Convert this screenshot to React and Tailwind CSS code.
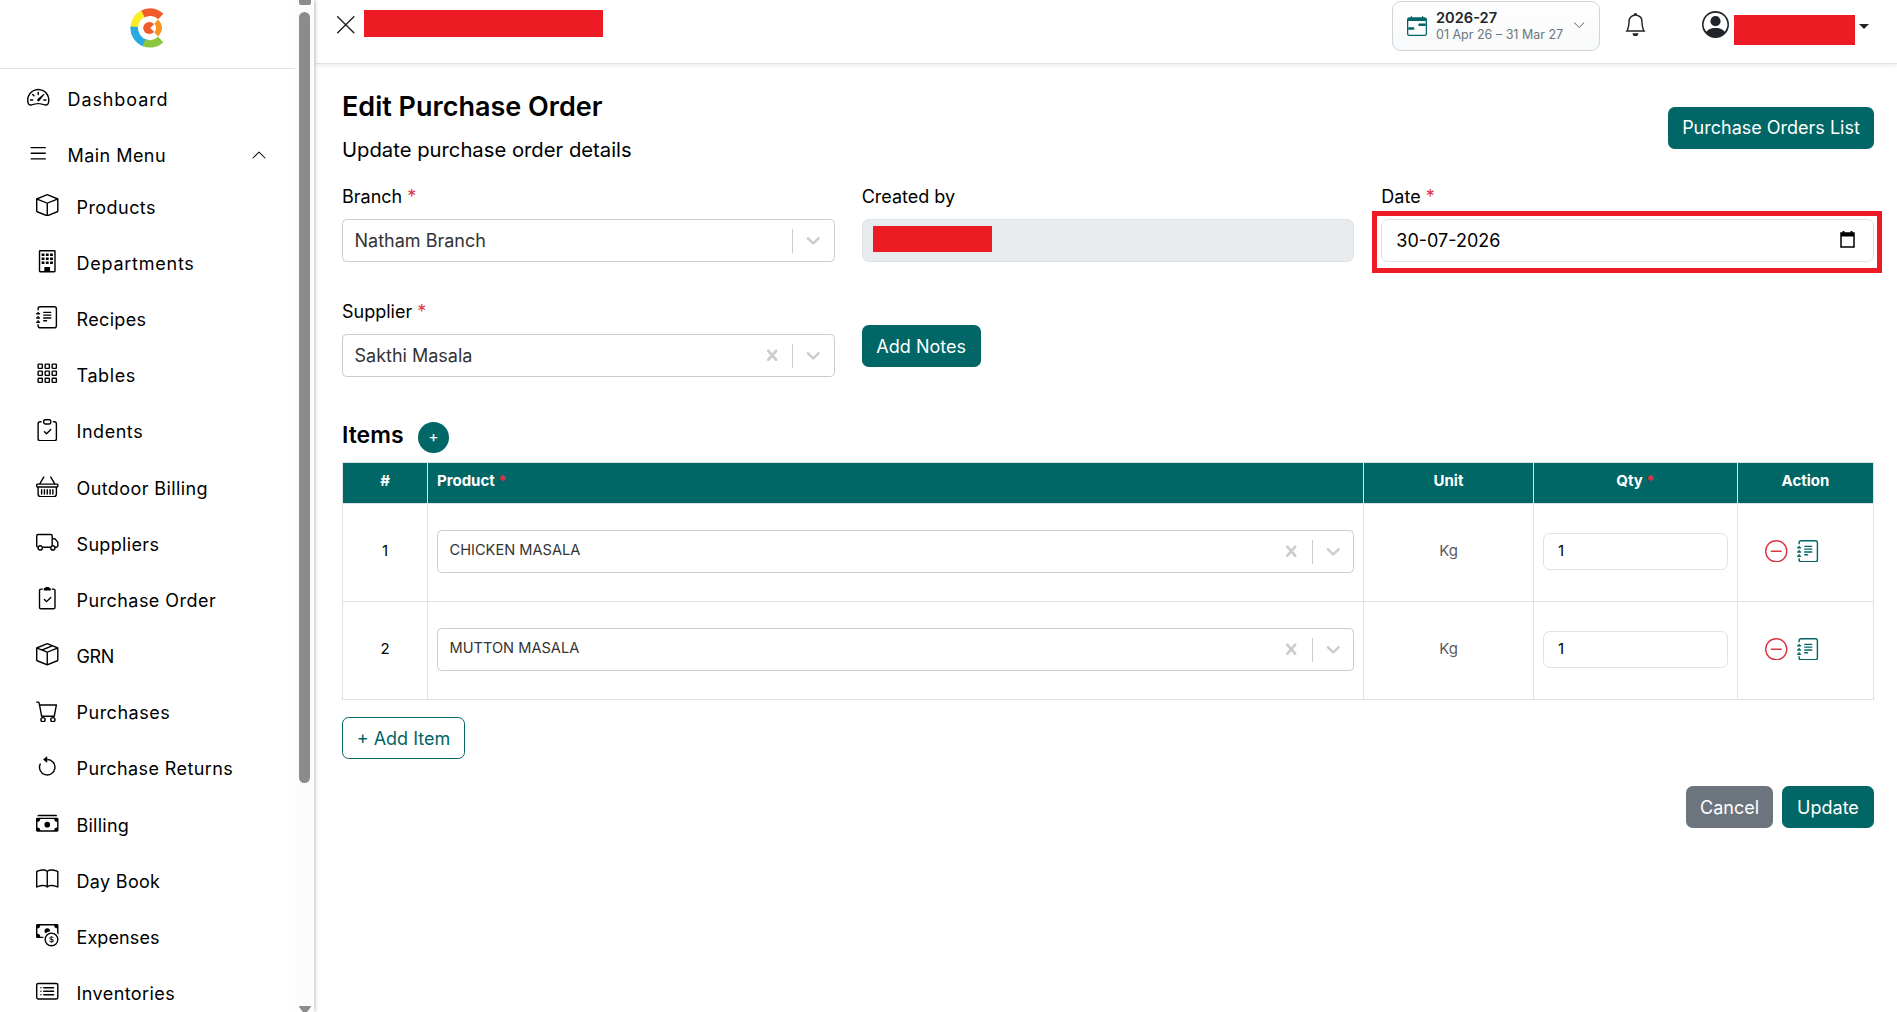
import React from 'react';
import {
  BsSpeedometer2,
  BsList,
  BsBoxSeam,
  BsBox,
  BsJournalText,
  BsGrid3X3Gap,
  BsClipboardCheck,
  BsBasket,
  BsTruck,
  BsCart,
  BsArrowCounterclockwise,
  BsCashStack,
  BsBook,
  BsCashCoin,
  BsCardList,
  BsChevronUp,
  BsChevronDown,
  BsXLg,
  BsCalendarRange,
  BsBell,
  BsPersonCircle,
  BsDashCircle,
} from 'react-icons/bs';

// Tall building with a grid of windows
const BuildingIcon = ({ className }) => (
  <svg viewBox="0 0 16 16" fill="currentColor" className={className}>
    <path fillRule="evenodd" d="M3 0a1 1 0 0 0-1 1v14a1 1 0 0 0 1 1h10a1 1 0 0 0 1-1V1a1 1 0 0 0-1-1zm0 1h10v14h-3v-2.5a.5.5 0 0 0-.5-.5h-3a.5.5 0 0 0-.5.5V15H3z" />
    <path d="M4 2.5h2v1.8H4zM7 2.5h2v1.8H7zM10 2.5h2v1.8h-2zM4 5.3h2v1.8H4zM7 5.3h2v1.8H7zM10 5.3h2v1.8h-2zM4 8.1h2v1.8H4zM7 8.1h2v1.8H7zM10 8.1h2v1.8h-2zM6.2 12h3.6v3.5H6.2z" />
  </svg>
);

// Narrow clipboard with a solid clip
const OrderIcon = ({ className }) => (
  <svg viewBox="0 0 16 16" fill="none" stroke="currentColor" className={className}>
    <path d="M4.5 1.5h-1a1 1 0 0 0-1 1v12a1 1 0 0 0 1 1h9a1 1 0 0 0 1-1v-12a1 1 0 0 0-1-1h-1" strokeLinecap="round" />
    <path d="M6 8.9l1.5 1.5 3-3" strokeLinecap="round" strokeLinejoin="round" />
    <path d="M5.5 2.5V1.2A1 1 0 0 1 6.5.5 1.6 1.6 0 0 1 8 0a1.6 1.6 0 0 1 1.5.5 1 1 0 0 1 1 .7v1.3z" fill="currentColor" stroke="none" />
  </svg>
);

const subMenu = [
  { label: 'Products', icon: BsBox, tracking: 'tracking-[0.44px]' },
  { label: 'Departments', icon: BuildingIcon, tracking: 'tracking-[0.75px]' },
  { label: 'Recipes', icon: BsJournalText, tracking: 'tracking-[0.35px]' },
  { label: 'Tables', icon: BsGrid3X3Gap, tracking: 'tracking-[0.6px]' },
  { label: 'Indents', icon: BsClipboardCheck, tracking: 'tracking-[0.55px]' },
  { label: 'Outdoor Billing', icon: BsBasket, tracking: 'tracking-[0.4px]' },
  { label: 'Suppliers', icon: BsTruck, tracking: 'tracking-[0.34px]' },
  { label: 'Purchase Order', icon: OrderIcon, tracking: 'tracking-[0.46px]' },
  { label: 'GRN', icon: BsBoxSeam, tracking: 'tracking-[-0.4px]' },
  { label: 'Purchases', icon: BsCart, tracking: 'tracking-[0.5px]' },
  { label: 'Purchase Returns', icon: BsArrowCounterclockwise, tracking: 'tracking-[0.4px]' },
  { label: 'Billing', icon: BsCashStack, tracking: 'tracking-[0.24px]' },
  { label: 'Day Book', icon: BsBook, tracking: 'tracking-[0.32px]' },
  { label: 'Expenses', icon: BsCashCoin, tracking: 'tracking-[0.1px]' },
  { label: 'Inventories', icon: BsCardList, tracking: 'tracking-[0.42px]' },
];

const items = [
  { id: 1, product: 'CHICKEN MASALA', unit: 'Kg', qty: 1 },
  { id: 2, product: 'MUTTON MASALA', unit: 'Kg', qty: 1 },
];

const Logo = () => (
  <svg width="34" height="40" viewBox="0 0 34 40" fill="none">
    <g strokeWidth="7.6">
      <path d="M12.2 6.2A15.8 15.8 0 0 1 30.8 8.4" stroke="#f15a29" />
      <path d="M4.2 19.5A15.8 15.8 0 0 1 13 5.8" stroke="#f9ed25" />
      <path d="M15 35A15.8 15.8 0 0 1 4.2 18.8" stroke="#27aae1" />
      <path d="M30.8 31.6A15.8 15.8 0 0 1 14 34.6" stroke="#8dc63f" />
    </g>
    <circle cx="19.3" cy="20" r="6.1" fill="#f15a29" />
    <path d="M26 14.6L20.2 20l5.8 5.4z" fill="#fff" />
    <path d="M28 11.5Q36 20 28 28.5L24.5 24.5Q27.5 20 24.5 15.5Z" fill="#f7941e" />
  </svg>
);

const Sidebar = () => (
  <aside className="relative z-10 flex h-full w-[314px] shrink-0 bg-white shadow-[1px_0_4px_rgba(0,0,0,0.25)]">
    <div className="w-[295px] overflow-hidden">
      <div className="flex h-[69px] justify-center border-b border-[#dee2e6] pt-2 pr-0.5">
        <Logo />
      </div>
      <nav className="text-[18px] text-black">
        <a className="mt-0.5 flex h-[56px] items-center pl-[27px]">
          <BsSpeedometer2 className="-mt-1 size-[22.5px]" />
          <span className="ml-[18px] tracking-[0.9px]">Dashboard</span>
        </a>
        <a className="flex h-[56px] items-center pr-[28px] pl-[27px]">
          <BsList className="-mt-1 size-[22.5px]" />
          <span className="ml-[18px] flex-1 tracking-[0.45px]">Main Menu</span>
          <BsChevronUp className="size-[16px]" />
        </a>
        <ul className="-mt-[4px]">
          {subMenu.map(({ label, icon: Icon, tracking }) => (
            <li key={label} className="flex h-[56.2px] items-center pl-[36px]">
              <Icon className="-mt-1 size-[22.5px]" />
              <span className={`ml-[18px] whitespace-nowrap ${tracking}`}>{label}</span>
            </li>
          ))}
        </ul>
      </nav>
    </div>
    {/* scrollbar */}
    <div className="flex w-[19px] flex-col items-center bg-[#fcfcfc]">
      <div className="h-[5px] w-3 rounded-b-[2px] bg-[#8b8b8b]" />
      <div className="mt-[7px] h-[771px] w-[11px] rounded-full bg-[#8b8b8b]" />
      <svg className="mt-auto" width="12" height="6" viewBox="0 0 12 6">
        <path d="M0 1Q0 0 1 0h10q1 0 1 1L8 6H4z" fill="#8b8b8b" />
      </svg>
    </div>
  </aside>
);

const TopBar = () => (
  <header className="flex h-16 items-start border-b border-[#dee2e6] pr-7 pl-[18px] shadow-[0_2px_4px_rgba(0,0,0,0.07)]">
    <BsXLg className="mt-[12.5px] size-[23.5px] text-[#212529]" />
    <div className="mt-2.5 ml-[6.5px] h-[27px] w-[239px] bg-[#ed1c24]" />
    <button className="mt-px ml-auto flex h-[50px] w-[208px] items-center rounded-[9px] border border-[#ced4da] bg-linear-to-b from-white to-[#f8f9fa] pl-[14px] text-left">
      <BsCalendarRange className="size-5 text-[#006666]" />
      <span className="ml-[9px] flex w-[136.5px] flex-col">
        <span className="text-[14.6px] leading-[17px] font-semibold text-[#212529]">2026-27</span>
        <span className="text-[12.5px] leading-[16px] whitespace-nowrap text-[#6c757d]">01 Apr 26 – 31 Mar 27</span>
      </span>
      <BsChevronDown className="-mt-0.5 size-[12.4px] text-[#6c757d]" />
    </button>
    <BsBell className="mt-[13px] ml-[24px] size-[23px] text-[#212529]" />
    <BsPersonCircle className="mt-[11px] ml-[55px] size-[27px] text-[#212529]" />
    <div className="mt-[15px] ml-[5px] h-[30px] w-[121px] bg-[#ed1c24]" />
    <span className="mt-6 ml-1 border-x-5 border-t-5 border-x-transparent border-t-[#212529]" />
  </header>
);

const Required = () => <span className="text-[#dc3545]">*</span>;

const Label = ({ children, required }) => (
  <label className="block h-6 text-[18px] leading-6">
    {children} {required && <Required />}
  </label>
);

const Select = ({ value, clearable, small }) => (
  <div className="flex h-[43px] w-full items-center rounded-[4.5px] border border-[#cccccc] bg-white pl-[11.5px] text-[#333333]">
    <span className={small ? '-mt-[2px] flex-1 text-[14.6px]' : 'flex-1 text-[18px]'}>{value}</span>
    {clearable && (
      <svg className="mr-[9px] size-[22.5px] text-[#cccccc]" viewBox="0 0 20 20" fill="currentColor">
        <path d="M14.348 14.849c-0.469 0.469-1.229 0.469-1.697 0l-2.651-3.030-2.651 3.029c-0.469 0.469-1.229 0.469-1.697 0-0.469-0.469-0.469-1.229 0-1.697l2.758-3.15-2.759-3.152c-0.469-0.469-0.469-1.228 0-1.697s1.228-0.469 1.697 0l2.652 3.031 2.651-3.031c0.469-0.469 1.228-0.469 1.697 0s0.469 1.229 0 1.697l-2.758 3.152 2.758 3.15c0.469 0.469 0.469 1.229 0 1.698z" />
      </svg>
    )}
    <span className="h-6 w-px bg-[#cccccc]" />
    <svg className="mx-[9px] size-[22.5px] text-[#cccccc]" viewBox="0 0 20 20" fill="currentColor">
      <path d="M4.516 7.548c0.436-0.446 1.043-0.481 1.576 0l3.908 3.747 3.908-3.747c0.533-0.481 1.141-0.446 1.574 0 0.436 0.445 0.408 1.197 0 1.615-0.406 0.418-4.695 4.502-4.695 4.502-0.217 0.223-0.502 0.335-0.787 0.335s-0.57-0.112-0.789-0.335c0 0-4.287-4.084-4.695-4.502s-0.436-1.17 0-1.615z" />
    </svg>
  </div>
);

const Button = ({ children, className }) => (
  <button className={`h-[42px] rounded-[6.75px] text-[18px] text-white ${className}`}>{children}</button>
);

const ItemsTable = () => (
  <table className="w-[1531px] table-fixed border-collapse text-[15px]">
    <colgroup>
      <col className="w-[85px]" />
      <col className="w-[936px]" />
      <col className="w-[170px]" />
      <col className="w-[204px]" />
      <col className="w-[136px]" />
    </colgroup>
    <thead className="bg-[#006666] text-white">
      <tr className="h-[41px] *:border *:border-[#dee2e6] *:pb-[3px] *:font-bold">
        <th>#</th>
        <th className="pl-[9px] text-left">Product <Required /></th>
        <th>Unit</th>
        <th>Qty <Required /></th>
        <th>Action</th>
      </tr>
    </thead>
    <tbody>
      {items.map((item) => (
        <tr key={item.id} className="h-[98px] *:border *:border-[#dee2e6]">
          <td className="pb-[3px] text-center">{item.id}</td>
          <td className="px-[9px] pb-[2px]">
            <Select value={item.product} clearable small />
          </td>
          <td className="pb-[3px] text-center text-[#595c5f]">{item.unit}</td>
          <td className="px-[9px] pb-[2px]">
            <div className="flex h-[37px] items-center rounded-[6.75px] border border-[#dee2e6] pb-px pl-[14px]">
              {item.qty}
            </div>
          </td>
          <td className="pb-[3px]">
            <div className="flex items-center gap-[9px] pl-[27px]">
              <BsDashCircle className="size-[22.5px] text-[#dc3545]" />
              <BsJournalText className="size-[22.5px] text-[#006666]" />
            </div>
          </td>
        </tr>
      ))}
    </tbody>
  </table>
);

const EditPurchaseOrder = () => (
  <main className="w-[1558px] pt-[27px] pl-[26px] text-black">
    <div className="flex items-center justify-between">
      <div>
        <h3 className="text-[27px] leading-8 font-semibold">Edit Purchase Order</h3>
        <p className="mt-[13px] text-[20.25px] leading-7">Update purchase order details</p>
      </div>
      <Button className="w-[206px] bg-[#006666]">Purchase Orders List</Button>
    </div>

    <div className="mt-[21px] grid grid-cols-3 gap-x-[27px] gap-y-[38px]">
      <div className="flex flex-col gap-2.5">
        <Label required>Branch</Label>
        <Select value="Natham Branch" />
      </div>
      <div className="flex flex-col gap-2.5">
        <Label>Created by</Label>
        <div className="h-[43px] rounded-[6.75px] border border-[#dee2e6] bg-[#e9ecef] pt-1.5 pl-2.5">
          <div className="h-[26px] w-[119px] bg-[#ed1c24]" />
        </div>
      </div>
      <div className="flex flex-col gap-2.5">
        <Label required>Date</Label>
        <div className="relative flex h-[43px] items-center justify-between rounded-[6.75px] border border-[#dee2e6] pr-[17.5px] pl-3.5 text-[18px]">
          30-07-2026
          <svg width="15" height="17" viewBox="0 0 15 17" className="-mt-0.5">
            <path d="M1 2h13v14H1z" fill="none" stroke="#000" strokeWidth="1.5" />
            <path d="M1 2h13v3.5H1zM2.6 0h1.8v2.5H2.6zM10.6 0h1.8v2.5h-1.8z" />
          </svg>
          <div className="absolute -top-[9px] -right-[9px] -bottom-[12px] -left-[10px] border-5 border-[#ed1c24]" />
        </div>
      </div>
      <div className="flex flex-col gap-2.5">
        <Label required>Supplier</Label>
        <Select value="Sakthi Masala" clearable />
      </div>
      <div className="pt-[25px]">
        <Button className="w-[119px] bg-[#006666]">Add Notes</Button>
      </div>
    </div>

    <div className="mt-[43px] flex h-[42px] items-start gap-[14.5px]">
      <h5 className="text-[23px] leading-[30px] font-semibold">Items</h5>
      <button className="mt-[1.5px] flex size-[31px] items-center justify-center rounded-full bg-[#006666] text-[15.75px] text-white">
        +
      </button>
    </div>
    <ItemsTable />

    <button className="mt-[17px] h-[42px] w-[123px] rounded-[6.75px] border border-[#006666] text-[18px] text-[#006666]">
      + Add Item
    </button>
    <div className="mt-[27px] flex justify-end gap-[9px]">
      <Button className="w-[87px] bg-[#6c757d]">Cancel</Button>
      <Button className="w-[92px] bg-[#006666]">Update</Button>
    </div>
  </main>
);

function App() {
  return (
    <div className="flex h-[1012px] w-[1897px] overflow-hidden bg-white font-['Inter',sans-serif]">
      <Sidebar />
      <div className="flex-1 pl-[2px]">
        <TopBar />
        <EditPurchaseOrder />
      </div>
    </div>
  );
}

export default App;
